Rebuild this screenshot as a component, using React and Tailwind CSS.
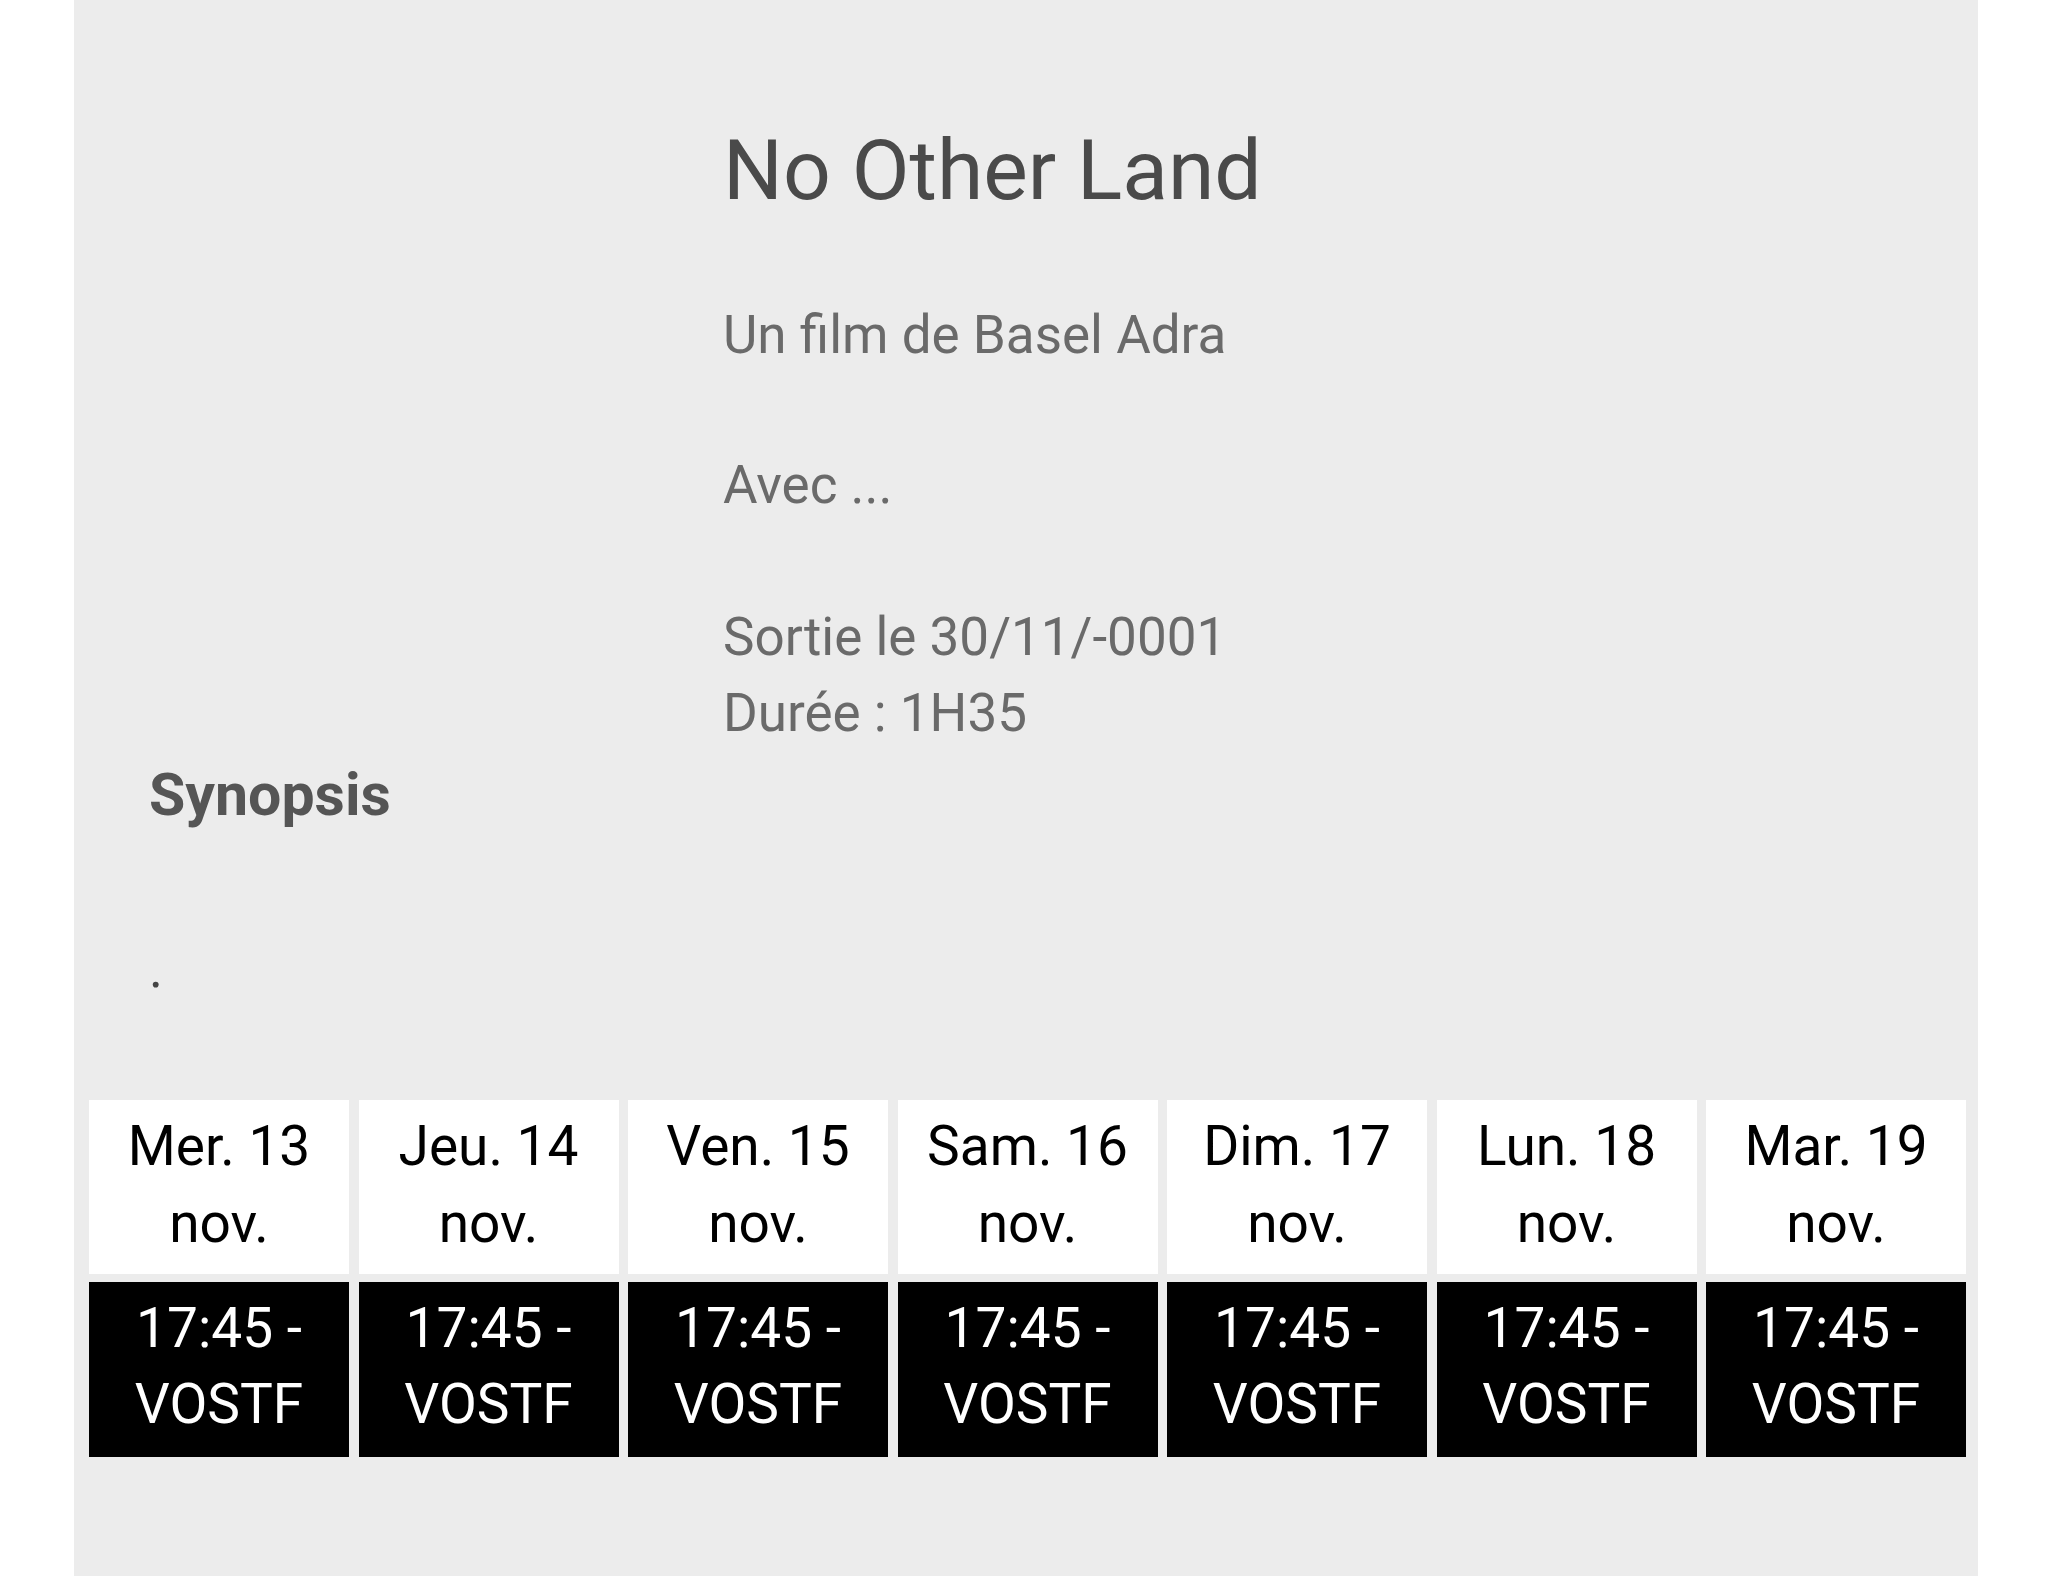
import React from "react";

const days = [
  ["Mer. 13", "nov."],
  ["Jeu. 14", "nov."],
  ["Ven. 15", "nov."],
  ["Sam. 16", "nov."],
  ["Dim. 17", "nov."],
  ["Lun. 18", "nov."],
  ["Mar. 19", "nov."],
];

export default function App() {
  return (
    <div
      className="w-full min-h-[1576px] bg-white flex"
      style={{ fontFamily: "Roboto, 'Noto Sans', sans-serif" }}
    >
      <div className="ml-[74px] w-[1904px] min-h-[1576px] bg-[#ececec] flex flex-col">
        <div className="pl-[649px] pt-[120px] flex flex-col">
          <h1 className="text-[84px] leading-[101px] font-normal text-[#4a4a4a]">
            No Other Land
          </h1>
          <p className="mt-[76px] text-[53px] leading-[76px] text-[#6a6a6a]">
            Un film de Basel Adra
          </p>
          <p className="mt-[74px] text-[53px] leading-[76px] text-[#6a6a6a]">
            Avec ...
          </p>
          <div className="mt-[76px] text-[53px] leading-[76px] text-[#6a6a6a]">
            <p>Sortie le 30/11/-0001</p>
            <p>Durée : 1H35</p>
          </div>
        </div>
        <div className="pl-[75px] mt-[10px]">
          <h2 className="text-[59px] leading-[67px] font-bold text-[#555555]">
            Synopsis
          </h2>
          <p className="mt-[103px] text-[53px] leading-[76px] text-[#444444]">.</p>
        </div>
        <div className="ml-[15px] mt-[93px] w-[1877px] grid grid-cols-7 gap-x-[9.5px] gap-y-[8px]">
          {days.map((d, i) => (
            <div
              key={"d" + i}
              className="h-[174px] bg-white pt-[8px] text-center text-black text-[55px] leading-[77px]"
            >
              <div>{d[0]}</div>
              <div>{d[1]}</div>
            </div>
          ))}
          {days.map((d, i) => (
            <div
              key={"s" + i}
              className="h-[175px] bg-black pt-[8px] text-center text-white text-[55px] leading-[76px]"
            >
              <div>17:45 -</div>
              <div>VOSTF</div>
            </div>
          ))}
        </div>
      </div>
    </div>
  );
}
